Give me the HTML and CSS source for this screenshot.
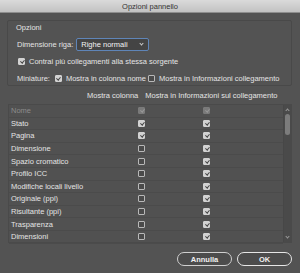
FILE: index.html
```html
<!DOCTYPE html>
<html lang="it">
<head>
  <meta charset="UTF-8" />
  <title>Opzioni pannello</title>
  <link rel="stylesheet" href="styles.css">
</head>
<body>

  <div class="titlebar">Opzioni pannello</div>

  <!-- Opzioni group -->
  <div class="group">
    <div class="legend">Opzioni</div>
    <div class="line">
      <span class="label">Dimensione riga:</span>
      <div class="select">Righe normali <span class="chev"></span></div>
    </div>
    <div class="line">
      <span class="cb on"></span>
      <span>Contrai più collegamenti alla stessa sorgente</span>
    </div>
    <div class="line">
      <span class="label">Miniature:</span>
      <span class="cb on"></span>
      <span>Mostra in colonna nome</span>
      <span class="cb"></span>
      <span>Mostra in Informazioni collegamento</span>
    </div>
  </div>

  <div class="heads">
    <span class="h1">Mostra colonna</span>
    <span>Mostra in Informazioni sul collegamento</span>
  </div>

  <div class="table">
    <div class="rows">
      <div class="row disabled"><span class="name">Nome</span><span class="cb on dim"></span><span class="cb on dim"></span></div>
      <div class="row"><span class="name">Stato</span><span class="cb on"></span><span class="cb on"></span></div>
      <div class="row"><span class="name">Pagina</span><span class="cb on"></span><span class="cb on"></span></div>
      <div class="row"><span class="name">Dimensione</span><span class="cb"></span><span class="cb on"></span></div>
      <div class="row"><span class="name">Spazio cromatico</span><span class="cb"></span><span class="cb on"></span></div>
      <div class="row"><span class="name">Profilo ICC</span><span class="cb"></span><span class="cb on"></span></div>
      <div class="row"><span class="name">Modifiche locali livello</span><span class="cb"></span><span class="cb on"></span></div>
      <div class="row"><span class="name">Originale (ppi)</span><span class="cb"></span><span class="cb on"></span></div>
      <div class="row"><span class="name">Risultante (ppi)</span><span class="cb"></span><span class="cb on"></span></div>
      <div class="row"><span class="name">Trasparenza</span><span class="cb"></span><span class="cb on"></span></div>
      <div class="row"><span class="name">Dimensioni</span><span class="cb"></span><span class="cb on"></span></div>
    </div>
    <div class="scroll">
      <span class="arrow up"></span>
      <span class="thumb"></span>
      <span class="arrow down"></span>
    </div>
  </div>

  <div class="buttons">
    <button>Annulla</button>
    <button class="default">OK</button>
  </div>

</body>
</html>
```

FILE: styles.css
```css
* {
  margin: 0;
  padding: 0;
  box-sizing: border-box;
}

body {
  width: 300px;
  height: 273px;
  overflow: hidden;
  background: #535353;
  font-family: 'Liberation Sans', Arial, sans-serif;
  font-size: 7.5px;
  color: #e4e4e4;
}

.titlebar {
  height: 13px;
  line-height: 13px;
  text-align: center;
  color: #333;
  background: linear-gradient(#dadada, #c2c2c2);
  border-bottom: 1px solid #8e8e8e;
}

/* Opzioni group */
.group {
  margin: 7px 8px 0 7px;
  height: 66px;
  border: 1px solid #494949;
  border-radius: 2px;
  padding: 2px 0 0 8px;
}

.legend {
  height: 10px;
  line-height: 10px;
}

.line {
  display: flex;
  align-items: center;
  height: 15px;
  margin-top: 2px;
}

.line:nth-child(2) {
  margin-top: 4px;
}

.label {
  margin: 0 3px 0 1px;
}

.select {
  width: 73px;
  height: 13px;
  line-height: 11px;
  padding-left: 4px;
  border: 1px solid #5f85b8;
  border-radius: 2px;
  background: #444;
  color: #f2f2f2;
  position: relative;
}

.chev {
  position: absolute;
  right: 5px;
  top: 3px;
  width: 3px;
  height: 3px;
  border-right: 1px solid #ccc;
  border-bottom: 1px solid #ccc;
  transform: rotate(45deg);
}

/* checkboxes */
.cb {
  display: inline-block;
  width: 7px;
  height: 7px;
  border: 1px solid #b8b8b8;
  border-radius: 1px;
  background: #4a4a4a;
  position: relative;
  flex: none;
}

.line .cb {
  margin: 0 4px 0 2px;
}

.cb.on {
  background: #d2d2d2;
  border-color: #d2d2d2;
}

.cb.on::after {
  content: '';
  position: absolute;
  left: 1.5px;
  top: 0;
  width: 1.5px;
  height: 3px;
  border-right: 1px solid #444;
  border-bottom: 1px solid #444;
  transform: rotate(40deg);
}

.cb.dim {
  background: #7a7a7a;
  border-color: #7a7a7a;
}

.cb.dim::after {
  border-color: #999;
}

/* table */
.heads {
  display: flex;
  height: 18px;
  align-items: center;
  padding-left: 87px;
}

.h1 {
  margin-right: 7px;
}

.table {
  display: flex;
  margin: 0 8px 0 8px;
  height: 139px;
  border: 1px solid #4a4a4a;
  background: #515151;
}

.rows {
  flex: 1;
}

.row {
  display: flex;
  align-items: center;
  height: 12.6px;
  border-bottom: 1px solid #4b4b4b;
}

.name {
  width: 129px;
  padding-left: 2px;
}

.row .cb {
  margin-right: 58px;
}

.disabled .name {
  color: #8c8c8c;
}

.scroll {
  width: 8px;
  background: #4a4a4a;
  border-left: 1px solid #474747;
  display: flex;
  flex-direction: column;
  align-items: center;
  padding: 2px 0;
}

.arrow {
  width: 3px;
  height: 3px;
  border-left: 1px solid #999;
  border-top: 1px solid #999;
  transform: rotate(45deg);
  margin-top: 2px;
}

.arrow.down {
  transform: rotate(225deg);
  margin-top: auto;
  margin-bottom: 2px;
}

.thumb {
  width: 5px;
  height: 21px;
  border-radius: 3px;
  background: #7c7c7c;
  margin-top: 2px;
}

.buttons {
  display: flex;
  justify-content: flex-end;
  gap: 5px;
  padding: 9px 8px 0 0;
}

button {
  width: 55px;
  height: 14px;
  border: 1px solid #cfcfcf;
  border-radius: 7px;
  background: #4c4c4c;
  color: #f0f0f0;
  font-family: 'Liberation Sans', Arial, sans-serif;
  font-size: 7.5px;
  font-weight: bold;
}

button.default {
  border: 1.5px solid #e6e6e6;
}
```
